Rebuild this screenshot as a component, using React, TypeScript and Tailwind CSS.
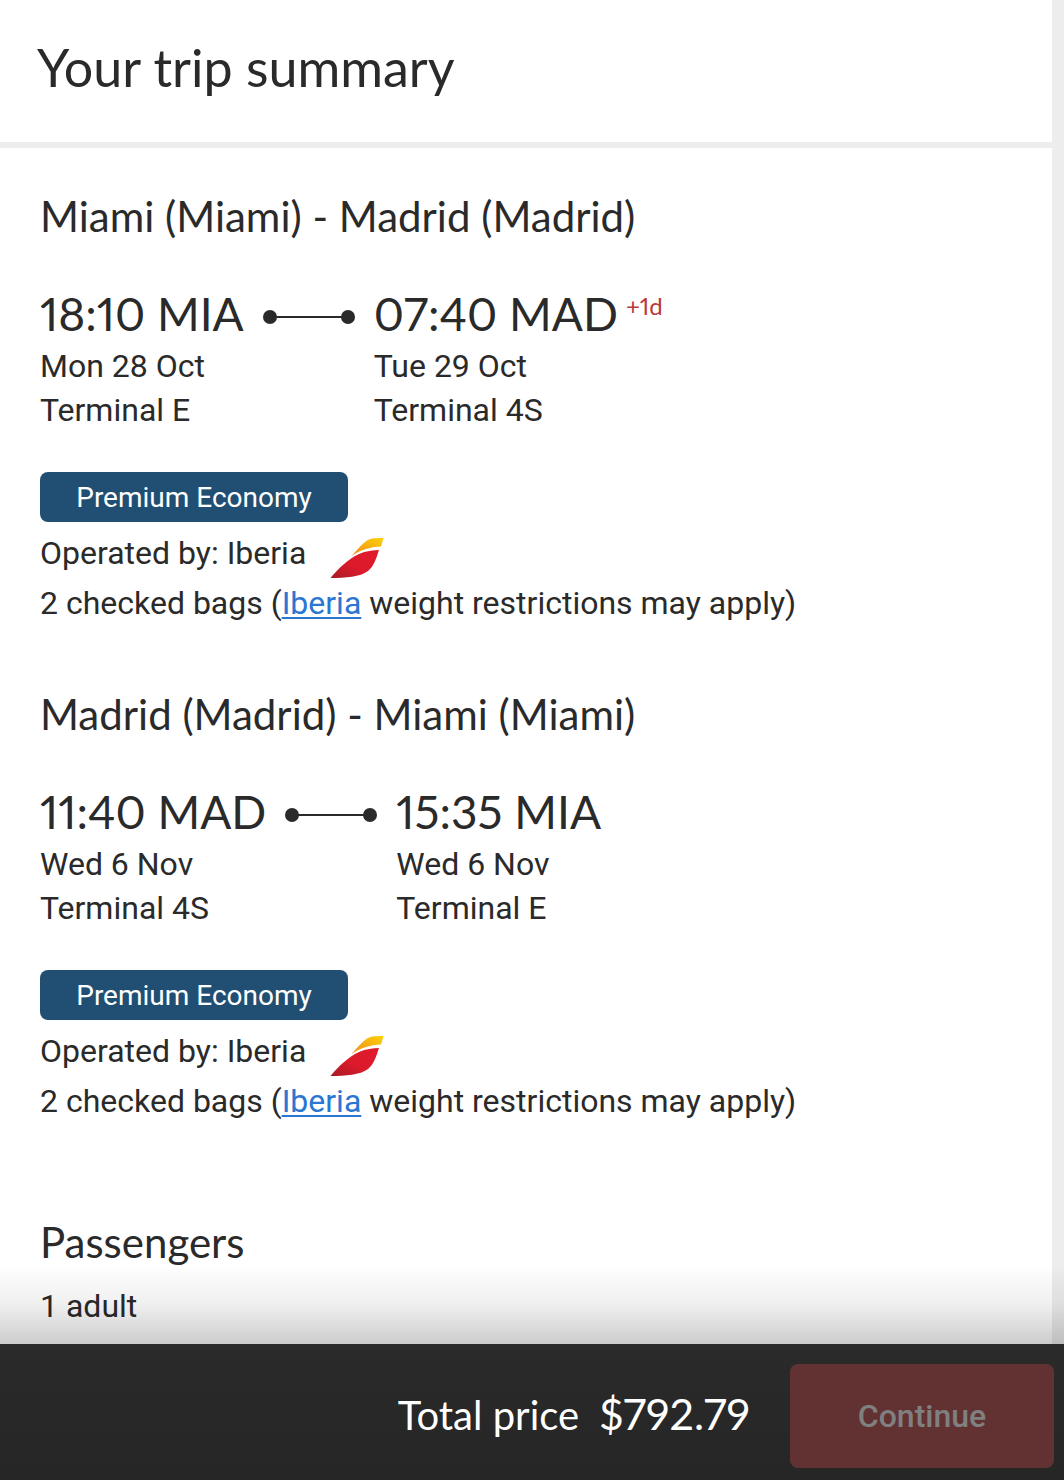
type Stop = {
  time: string;
  airport: string;
  date: string;
  terminal: string;
  dayOffset?: string;
};

type Leg = {
  title: string;
  from: Stop;
  to: Stop;
  cabin: string;
  carrier: string;
  bags: number;
};

const LEGS: Leg[] = [
  {
    title: "Miami (Miami) - Madrid (Madrid)",
    from: { time: "18:10", airport: "MIA", date: "Mon 28 Oct", terminal: "Terminal E" },
    to: {
      time: "07:40",
      airport: "MAD",
      date: "Tue 29 Oct",
      terminal: "Terminal 4S",
      dayOffset: "+1d",
    },
    cabin: "Premium Economy",
    carrier: "Iberia",
    bags: 2,
  },
  {
    title: "Madrid (Madrid) - Miami (Miami)",
    from: { time: "11:40", airport: "MAD", date: "Wed 6 Nov", terminal: "Terminal 4S" },
    to: { time: "15:35", airport: "MIA", date: "Wed 6 Nov", terminal: "Terminal E" },
    cabin: "Premium Economy",
    carrier: "Iberia",
    bags: 2,
  },
];

function IberiaLogo() {
  return (
    <svg width="54" height="42" viewBox="0 0 54 42" role="img" aria-label="Iberia">
      <defs>
        <linearGradient id="iberia-red" x1="0" y1="1" x2="1" y2="0">
          <stop offset="0" stopColor="#a51c24" />
          <stop offset="0.45" stopColor="#dc1a2b" />
          <stop offset="1" stopColor="#e01a2d" />
        </linearGradient>
        <linearGradient id="iberia-gold" x1="0" y1="1" x2="1" y2="0">
          <stop offset="0" stopColor="#ee8a1c" />
          <stop offset="1" stopColor="#fdd109" />
        </linearGradient>
      </defs>
      <path
        d="M0.5 41C9 31 18 22 29 17C36 14 43 13 49 13C46 22 44 29 38 34C30 40 16 41 0.5 41Z"
        fill="url(#iberia-red)"
      />
      <path
        d="M21.5 19C27 13 32 7 37 3.5C41 1 47 1 53.5 1L51 9.5C40 10 30 13 21.5 19Z"
        fill="url(#iberia-gold)"
      />
    </svg>
  );
}

function Connector() {
  return (
    <svg className="mt-[26px] shrink-0" width="92" height="14" viewBox="0 0 92 14" fill="#2a2a2a" aria-hidden="true">
      <circle cx="7" cy="7" r="7" />
      <rect x="7" y="6" width="78" height="2" />
      <circle cx="85" cy="7" r="7" />
    </svg>
  );
}

function StopInfo({ stop }: { stop: Stop }) {
  return (
    <div>
      <p className="font-[Lato,sans-serif] text-[46px] leading-[60px] whitespace-nowrap proportional-nums">
        {stop.time} {stop.airport}
        {stop.dayOffset && (
          <span className="ml-2 inline-block align-top text-[24px] leading-[44px] text-[#b93a3a]">
            {stop.dayOffset}
          </span>
        )}
      </p>
      <p>{stop.date}</p>
      <p>{stop.terminal}</p>
    </div>
  );
}

function LegSummary({ leg }: { leg: Leg }) {
  return (
    <section className="mb-[58px]">
      <h2 className="mb-10 font-[Lato,sans-serif] text-[42px] leading-[56px]">{leg.title}</h2>
      <div className="flex items-start gap-[19px] leading-[44px]">
        <StopInfo stop={leg.from} />
        <Connector />
        <StopInfo stop={leg.to} />
      </div>
      <div className="mt-10 mb-1.5 flex h-[50px] w-[308px] items-center justify-center rounded-lg bg-[#214f73] pt-0.5 text-[28px] text-white">
        {leg.cabin}
      </div>
      <p className="flex h-[50px] items-center gap-6">
        Operated by: {leg.carrier}
        <span className="pt-2.5">
          <IberiaLogo />
        </span>
      </p>
      <p className="leading-[50px]">
        {leg.bags} checked bags (
        <a href="#baggage" className="text-[#2b76d2] underline decoration-2 underline-offset-3">
          {leg.carrier}
        </a>{" "}
        weight restrictions may apply)
      </p>
    </section>
  );
}

export default function App() {
  return (
    <div className="min-h-screen border-r-12 border-[#ededed] bg-white pb-[136px] font-[Roboto,sans-serif] text-[32px] text-[#2a2a2a]">
      <header className="border-b-6 border-[#ededed] px-[37px] pt-8 pb-10">
        <h1 className="font-[Lato,sans-serif] text-[52px] leading-[70px]">Your trip summary</h1>
      </header>

      <main className="px-10 pt-10">
        {LEGS.map((leg) => (
          <LegSummary key={leg.title} leg={leg} />
        ))}
        <section className="pt-[30px]">
          <h2 className="mb-3.5 font-[Lato,sans-serif] text-[42px] leading-[56px]">Passengers</h2>
          <p className="leading-[44px]">1 adult</p>
        </section>
      </main>

      <footer className="fixed inset-x-0 bottom-0">
        <div className="pointer-events-none absolute inset-x-0 bottom-full h-20 bg-linear-to-b from-transparent via-black/6 to-black/20" />
        <div className="flex h-[136px] items-center justify-end bg-linear-to-b from-[#2a2a2a] to-[#262626] pr-2.5 text-white">
          <p className="mr-10 flex items-baseline gap-5 pt-1 font-[Lato,sans-serif] proportional-nums">
            <span className="text-[40px]">Total price</span>
            <span className="text-[43px]">$792.79</span>
          </p>
          <button
            type="button"
            disabled
            className="mt-2 h-[104px] w-[264px] rounded-lg bg-[#623232] font-medium text-[#808080]"
          >
            Continue
          </button>
        </div>
      </footer>
    </div>
  );
}
